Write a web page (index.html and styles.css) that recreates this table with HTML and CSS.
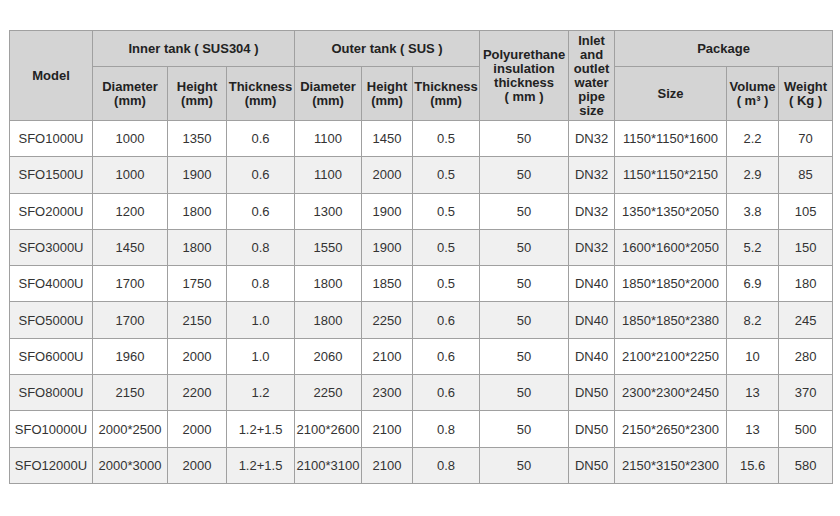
FILE: index.html
```html
<!DOCTYPE html>
<html>
<head>
<meta charset="utf-8">
<link rel="stylesheet" href="styles.css">
</head>
<body>
<div class="wrap">
<table class="spec">
<colgroup>
<col class="c1"><col class="c2"><col class="c3"><col class="c4"><col class="c5"><col class="c6"><col class="c7"><col class="c8"><col class="c9"><col class="c10"><col class="c11"><col class="c12">
</colgroup>
<thead>
<tr class="h1">
<th rowspan="2">Model</th>
<th colspan="3">Inner tank ( SUS304 )</th>
<th colspan="3">Outer tank ( SUS )</th>
<th rowspan="2">Polyurethane insulation thickness<br>( mm )</th>
<th rowspan="2">Inlet and outlet water pipe size</th>
<th colspan="3">Package</th>
</tr>
<tr class="h2">
<th>Diameter<br>(mm)</th>
<th>Height<br>(mm)</th>
<th>Thickness<br>(mm)</th>
<th>Diameter<br>(mm)</th>
<th>Height<br>(mm)</th>
<th>Thickness<br>(mm)</th>
<th>Size</th>
<th>Volume<br>( m³ )</th>
<th>Weight<br>( Kg )</th>
</tr>
</thead>
<tbody>
<tr><td>SFO1000U</td><td>1000</td><td>1350</td><td>0.6</td><td>1100</td><td>1450</td><td>0.5</td><td>50</td><td>DN32</td><td>1150*1150*1600</td><td>2.2</td><td>70</td></tr>
<tr><td>SFO1500U</td><td>1000</td><td>1900</td><td>0.6</td><td>1100</td><td>2000</td><td>0.5</td><td>50</td><td>DN32</td><td>1150*1150*2150</td><td>2.9</td><td>85</td></tr>
<tr><td>SFO2000U</td><td>1200</td><td>1800</td><td>0.6</td><td>1300</td><td>1900</td><td>0.5</td><td>50</td><td>DN32</td><td>1350*1350*2050</td><td>3.8</td><td>105</td></tr>
<tr><td>SFO3000U</td><td>1450</td><td>1800</td><td>0.8</td><td>1550</td><td>1900</td><td>0.5</td><td>50</td><td>DN32</td><td>1600*1600*2050</td><td>5.2</td><td>150</td></tr>
<tr><td>SFO4000U</td><td>1700</td><td>1750</td><td>0.8</td><td>1800</td><td>1850</td><td>0.5</td><td>50</td><td>DN40</td><td>1850*1850*2000</td><td>6.9</td><td>180</td></tr>
<tr><td>SFO5000U</td><td>1700</td><td>2150</td><td>1.0</td><td>1800</td><td>2250</td><td>0.6</td><td>50</td><td>DN40</td><td>1850*1850*2380</td><td>8.2</td><td>245</td></tr>
<tr><td>SFO6000U</td><td>1960</td><td>2000</td><td>1.0</td><td>2060</td><td>2100</td><td>0.6</td><td>50</td><td>DN40</td><td>2100*2100*2250</td><td>10</td><td>280</td></tr>
<tr><td>SFO8000U</td><td>2150</td><td>2200</td><td>1.2</td><td>2250</td><td>2300</td><td>0.6</td><td>50</td><td>DN50</td><td>2300*2300*2450</td><td>13</td><td>370</td></tr>
<tr><td>SFO10000U</td><td>2000*2500</td><td>2000</td><td>1.2+1.5</td><td>2100*2600</td><td>2100</td><td>0.8</td><td>50</td><td>DN50</td><td>2150*2650*2300</td><td>13</td><td>500</td></tr>
<tr><td>SFO12000U</td><td>2000*3000</td><td>2000</td><td>1.2+1.5</td><td>2100*3100</td><td>2100</td><td>0.8</td><td>50</td><td>DN50</td><td>2150*3150*2300</td><td>15.6</td><td>580</td></tr>
</tbody>
</table>
</div>
</body>
</html>
```

FILE: styles.css
```css
html, body {
  margin: 0;
  padding: 0;
  background: #fff;
}
.wrap {
  padding: 30px 0 0 9px;
}
.spec {
  table-layout: fixed;
  width: 823px;
  border-collapse: collapse;
  font-family: "Liberation Sans", Arial, "Noto Sans CJK SC", sans-serif;
  font-size: 13px;
  color: #333;
}
.c1 { width: 83px; }
.c2 { width: 75px; }
.c3 { width: 59px; }
.c4 { width: 68px; }
.c5 { width: 67px; }
.c6 { width: 51px; }
.c7 { width: 67px; }
.c8 { width: 89px; }
.c9 { width: 46px; }
.c10 { width: 112px; }
.c11 { width: 52px; }
.c12 { width: 54px; }
.spec th, .spec td {
  border: 1px solid #a0a0a0;
  text-align: center;
  vertical-align: middle;
  padding: 0 1px;
}
.spec th {
  background: #d4d4d4;
  color: #222;
  font-weight: bold;
  line-height: 14px;
  padding: 0;
}
.h1 { height: 36px; }
.h2 { height: 54px; }
.spec tbody tr { height: 36.3px; }
.spec tbody tr:nth-child(even) td {
  background: #f0f0f0;
}
.spec td {
  white-space: nowrap;
}
```
